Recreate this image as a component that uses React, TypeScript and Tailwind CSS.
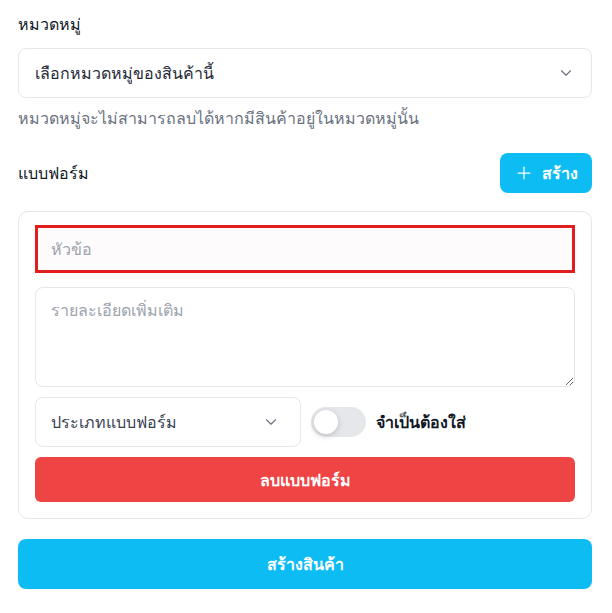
import { ChevronDown, Plus } from 'lucide-react';

export default function App() {
  return (
    <div className="min-h-[613px] bg-white pl-[18px] pr-[20px] pt-[12px] font-['Noto_Sans','Inter',sans-serif] text-[#111827]">
      <p className="text-base font-medium leading-6">หมวดหมู่</p>
      <div className="mt-3 flex h-[50px] items-center justify-between rounded-lg border border-[#e5e7eb] bg-white pl-4 pr-4">
        <span className="text-base text-[#1f2937]">เลือกหมวดหมู่ของสินค้านี้</span>
        <ChevronDown className="h-[18px] w-[18px] text-[#6b7280]" strokeWidth={1.5} />
      </div>
      <p className="mt-2 text-base leading-6 text-[#6b7280]">หมวดหมู่จะไม่สามารถลบได้หากมีสินค้าอยู่ในหมวดหมู่นั้น</p>

      <div className="mt-[23px] flex items-center justify-between">
        <p className="text-base font-medium">แบบฟอร์ม</p>
        <button className="flex h-10 items-center gap-2 rounded-lg bg-[#0ebcf4] px-[14px] text-base font-semibold text-white">
          <Plus className="h-5 w-5" strokeWidth={1.5} />
          สร้าง
        </button>
      </div>

      <div className="mt-[18px] flex flex-col gap-[14px] rounded-[10px] border border-[#e5e7eb] p-4 pt-[13px]">
        <div className="flex h-[48px] items-center border-[3px] border-[#e11d1d] bg-[#fefbfc] px-[13px]">
          <span className="text-base text-[#9ca3af]">หัวข้อ</span>
        </div>
        <textarea
          placeholder="รายละเอียดเพิ่มเติม"
          className="h-[100px] w-full resize-y rounded-lg border border-[#e5e7eb] px-[15px] py-[10px] text-base placeholder:text-[#9ca3af] focus:outline-none"
        />
        <div className="-mt-1 flex items-center gap-[10px]">
          <div className="flex h-[50px] w-[266px] items-center justify-between rounded-lg border border-[#e5e7eb] pl-[15px] pr-5">
            <span className="text-base text-[#374151]">ประเภทแบบฟอร์ม</span>
            <ChevronDown className="h-[18px] w-[18px] text-[#6b7280]" strokeWidth={1.5} />
          </div>
          <div className="relative h-[30px] w-[55px] rounded-full bg-[#e5e7eb]">
            <span className="absolute left-[3px] top-[3px] h-6 w-6 rounded-full bg-white shadow-[0_2px_6px_rgba(0,0,0,0.18)]" />
          </div>
          <span className="text-base font-semibold">จำเป็นต้องใส่</span>
        </div>
        <button className="-mt-1 h-[45px] w-full rounded-md bg-[#ef4444] text-base font-semibold text-white">
          ลบแบบฟอร์ม
        </button>
      </div>

      <button className="mt-[20px] h-[50px] w-full rounded-lg bg-[#0ebcf4] text-base font-semibold text-white">
        สร้างสินค้า
      </button>
    </div>
  );
}
